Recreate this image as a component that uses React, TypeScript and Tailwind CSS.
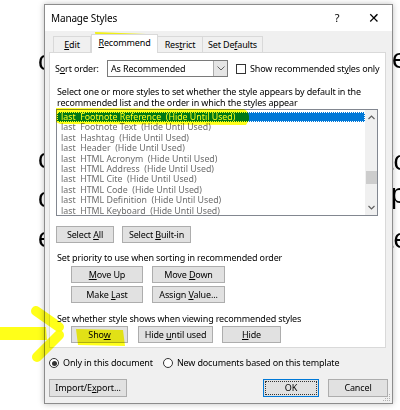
import React from "react";

const font = { fontFamily: '"Noto Sans", "Liberation Sans", sans-serif' };

function U({ children }: { children: React.ReactNode }) {
  return <span className="underline underline-offset-[1px] decoration-[0.5px]">{children}</span>;
}

function Btn({ className, children }: { className: string; children: React.ReactNode }) {
  return (
    <div
      className={`h-[17px] flex items-center justify-center bg-[#e1e1e1] border border-[#adadad] text-[9px] text-black leading-none ${className}`}
    >
      <span>{children}</span>
    </div>
  );
}

const items = [
  "last  Footnote Text  (Hide Until Used)",
  "last  Hashtag  (Hide Until Used)",
  "last  Header  (Hide Until Used)",
  "last  HTML Acronym  (Hide Until Used)",
  "last  HTML Address  (Hide Until Used)",
  "last  HTML Cite  (Hide Until Used)",
  "last  HTML Code  (Hide Until Used)",
  "last  HTML Definition  (Hide Until Used)",
  "last  HTML Keyboard  (Hide Until Used)",
];

export default function App() {
  return (
    <div className="relative w-[400px] h-[410px] bg-white overflow-hidden" style={font}>
      {/* document text behind the dialog */}
      <div className="absolute inset-0 text-black text-[27px] leading-none" style={{ fontFamily: '"Liberation Sans", sans-serif' }}>
        <span className="absolute left-[38px] top-[48px]">c</span>
        <span className="absolute left-[38px] top-[146px]">c</span>
        <span className="absolute left-[38px] top-[185px]">o</span>
        <span className="absolute left-[38px] top-[225px]">e</span>
        <span className="absolute left-[392px] top-[46px]">e</span>
        <span className="absolute left-[386px] top-[148px]">to</span>
        <span className="absolute left-[391px] top-[181px]">p</span>
        <span className="absolute left-[386px] top-[226px]">te</span>
      </div>

      {/* dialog window */}
      <div className="absolute left-[44px] top-[4px] w-[349px] h-[400px] border border-[#8c8c8c] bg-[#f0f0f0] shadow-[0_0_6px_rgba(0,0,0,0.25)] flex flex-col tracking-[-0.15px]">
        {/* title bar */}
        <div className="h-[26px] bg-white flex items-center text-[10px] text-black">
          <span className="ml-[6px]">Manage Styles</span>
          <span className="ml-auto w-[30px] text-center text-[11px]">?</span>
          <span className="ml-[4px] w-[36px] text-center text-[14px] font-light leading-none">✕</span>
        </div>

        {/* tabs */}
        <div className="flex items-end ml-[8px] h-[21px] text-[9px] text-black relative z-10">
          <div className="w-[38px] h-[16px] border border-b-0 border-[#d9d9d9] flex items-center justify-center bg-[#f0f0f0]">
            <span><U>E</U>dit</span>
          </div>
          <div className="w-[67px] h-[19px] -mb-px border border-b-0 border-[#d9d9d9] bg-white flex items-center justify-center pb-[2px]">
            <span><U>R</U>ecommend</span>
          </div>
          <div className="w-[45px] h-[16px] border border-b-0 border-l-0 border-[#d9d9d9] flex items-center justify-center bg-[#f0f0f0]">
            <span>Res<U>t</U>rict</span>
          </div>
          <div className="w-[60px] h-[16px] border border-b-0 border-l-0 border-[#d9d9d9] flex items-center justify-center bg-[#f0f0f0]">
            <span>Set De<U>f</U>aults</span>
          </div>
        </div>

        {/* panel */}
        <div className="ml-[4px] w-[337px] h-[296px] bg-white border border-[#d9d9d9] flex flex-col text-[9px] text-black leading-[11px]">
          {/* sort order row */}
          <div className="flex items-center mt-[7px] h-[17px]">
            <span className="ml-[5px] w-[52px]">S<U>o</U>rt order:</span>
            <div className="w-[121px] h-[17px] border border-[#7a7a7a] flex items-center bg-white">
              <span className="ml-[3px]">As Recommended</span>
              <div className="ml-auto w-[14px] h-full bg-[#e5e5e5] border-l border-[#acacac] flex items-center justify-center">
                <svg width="8" height="5" viewBox="0 0 8 5">
                  <path d="M0.5 0.5 L4 4 L7.5 0.5" fill="none" stroke="#606060" strokeWidth="1" />
                </svg>
              </div>
            </div>
            <div className="ml-[8px] w-[10px] h-[10px] border border-[#333] bg-white" />
            <span className="ml-[4px] whitespace-nowrap">Show recommended st<U>y</U>les only</span>
          </div>

          <div className="mt-[9px] ml-[7px] whitespace-nowrap">
            <div>Select one or more styles to set whether the style appears by default in the</div>
            <div>recommended list and the order in which the styles appear</div>
          </div>

          {/* listbox */}
          <div className="ml-[6px] mt-[1px] w-[322px] h-[107px] border border-[#828790] bg-white flex tracking-normal">
            <div className="flex-1 pt-[2px] text-[8.8px] leading-[10.4px] whitespace-pre">
              <div className="h-[10.4px] w-[308px] bg-[#0078d7] text-white pl-[4px] outline-dotted outline-1 outline-[#ffffff] -outline-offset-1">
                last  Footnote Reference  (Hide Until Used)
              </div>
              {items.map((t) => (
                <div key={t} className="h-[10.4px] pl-[4px] text-[#6d6d6d]">
                  {t}
                </div>
              ))}
            </div>
            <div className="w-[12px] h-full bg-[#f0f0f0] flex flex-col items-center">
              <svg className="mt-[5px]" width="7" height="5" viewBox="0 0 7 5">
                <path d="M0.5 4 L3.5 1 L6.5 4" fill="none" stroke="#606060" strokeWidth="1.2" />
              </svg>
              <div className="mt-[51px] w-[11px] h-[13px] bg-[#cdcdcd]" />
              <svg className="mt-auto mb-[5px]" width="7" height="5" viewBox="0 0 7 5">
                <path d="M0.5 1 L3.5 4 L6.5 1" fill="none" stroke="#606060" strokeWidth="1.2" />
              </svg>
            </div>
          </div>

          <div className="flex mt-[10px] ml-[6px] gap-[8px]">
            <Btn className="w-[58px]">Select <U>A</U>ll</Btn>
            <Btn className="w-[69px]">Select <U>B</U>uilt-in</Btn>
          </div>

          <div className="mt-[9px] ml-[7px]">Set priority to use when sorting in recommended order</div>

          <div className="flex mt-[3px] ml-[21px] gap-[9px]">
            <Btn className="w-[72px]"><U>M</U>ove Up</Btn>
            <Btn className="w-[73px]">Move <U>D</U>own</Btn>
          </div>
          <div className="flex mt-[3px] ml-[21px] gap-[9px]">
            <Btn className="w-[72px]">Make <U>L</U>ast</Btn>
            <Btn className="w-[73px]">Assign <U>V</U>alue...</Btn>
          </div>

          <div className="mt-[10px] ml-[7px]">Set whether style shows when viewing recommended styles</div>

          <div className="flex mt-[2px] ml-[21px]">
            <Btn className="w-[57px]">Sho<U>w</U></Btn>
            <Btn className="w-[75px] ml-[10px]">Hide <U>u</U>ntil used</Btn>
            <Btn className="w-[59px] ml-[9px]"><U>H</U>ide</Btn>
          </div>
        </div>

        {/* radio row */}
        <div className="flex items-center mt-[9px] h-[12px] text-[9px] text-black">
          <div className="ml-[4px] w-[10px] h-[10px] rounded-full border border-[#333] bg-white flex items-center justify-center">
            <div className="w-[5px] h-[5px] rounded-full bg-[#333]" />
          </div>
          <span className="ml-[4px]">Only in this document</span>
          <div className="ml-[10px] w-[10px] h-[10px] rounded-full border border-[#333] bg-white" />
          <span className="ml-[4px]">New documents based on this template</span>
        </div>

        {/* bottom buttons */}
        <div className="flex mt-[10px] text-[9px]">
          <div className="ml-[4px] w-[78px] h-[18px] flex items-center justify-center bg-[#e1e1e1] border border-[#adadad]">
            <span>Import/E<U>x</U>port...</span>
          </div>
          <div className="ml-auto w-[56px] h-[18px] p-[1px] bg-[#e1e1e1] border border-[#0078d7]">
            <div className="w-full h-full border border-dotted border-[#333] flex items-center justify-center">
              <span>OK</span>
            </div>
          </div>
          <div className="ml-[9px] mr-[4px] w-[60px] h-[18px] flex items-center justify-center bg-[#e1e1e1] border border-[#adadad]">
            <span>Cancel</span>
          </div>
        </div>

        {/* size grip */}
        <svg className="absolute right-[1px] bottom-[1px]" width="8" height="8" viewBox="0 0 8 8">
          <rect x="6" y="0" width="1" height="1" fill="#b0b0b0" />
          <rect x="4" y="2" width="1" height="1" fill="#b0b0b0" />
          <rect x="6" y="2" width="1" height="1" fill="#b0b0b0" />
          <rect x="2" y="4" width="1" height="1" fill="#b0b0b0" />
          <rect x="4" y="4" width="1" height="1" fill="#b0b0b0" />
          <rect x="6" y="4" width="1" height="1" fill="#b0b0b0" />
          <rect x="0" y="6" width="1" height="1" fill="#b0b0b0" />
          <rect x="2" y="6" width="1" height="1" fill="#b0b0b0" />
          <rect x="4" y="6" width="1" height="1" fill="#b0b0b0" />
          <rect x="6" y="6" width="1" height="1" fill="#b0b0b0" />
        </svg>
      </div>

      {/* yellow highlighter marks */}
      <svg className="absolute inset-0 pointer-events-none mix-blend-multiply" width="400" height="410" viewBox="0 0 400 410">
        <g fill="#ffff00" fillOpacity="0.9" stroke="none">
          <path d="M95 32 L146 34 L148 47 L97 49 Z" />
          <path d="M56 108 L244 109 Q250 112 249 120 L246 125 L60 124 L56 122 Z" />
          <path d="M76 329 L123 330 L125 346 L78 345 Z" />
          <path d="M0 327 L46 327 L47 340 L0 340 Z" />
        </g>
        <g fill="none" stroke="#ffff00" strokeOpacity="0.9" strokeWidth="10" strokeLinecap="round">
          <path d="M36 311 L59 327" />
          <path d="M59 335 L37 357" />
        </g>
      </svg>
    </div>
  );
}
